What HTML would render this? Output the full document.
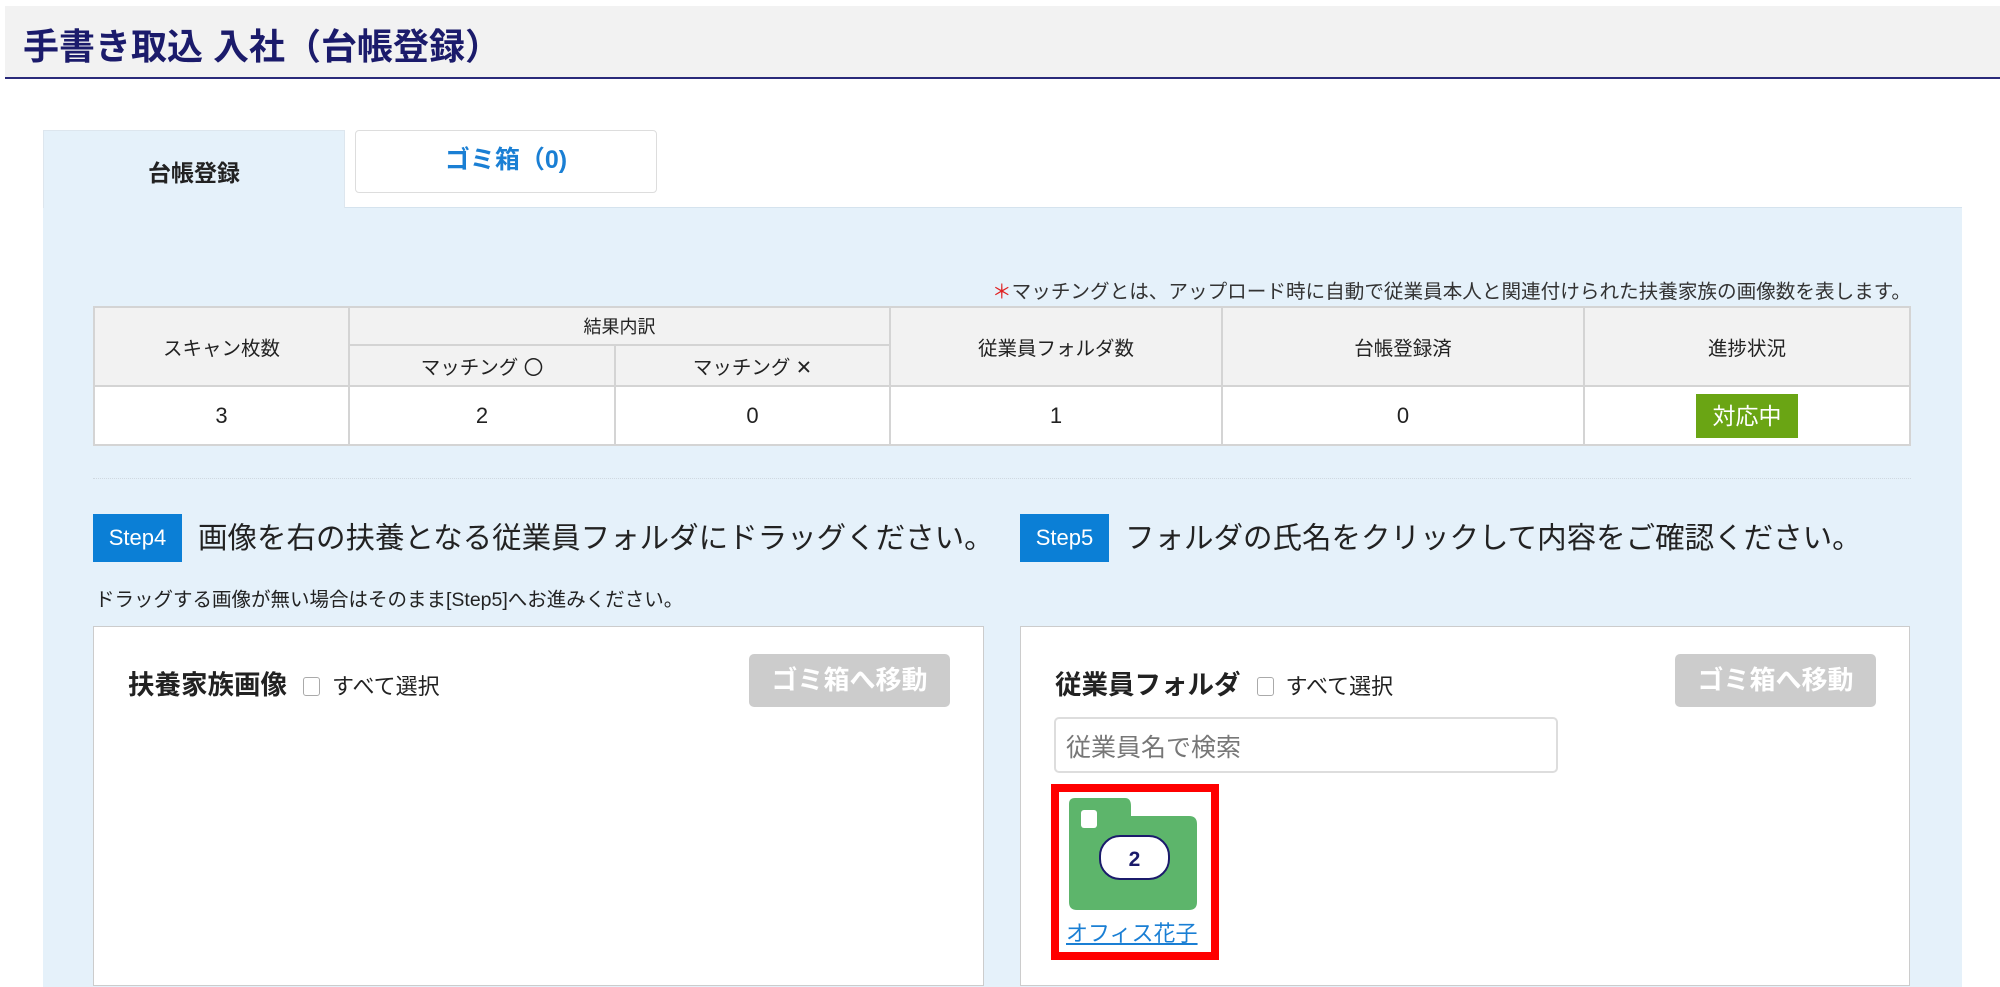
<!DOCTYPE html>
<html><head><meta charset="utf-8"><style>
*{box-sizing:border-box;margin:0;padding:0}
body{width:2000px;height:975px;overflow:hidden;background:#fff;font-family:"Liberation Sans","Noto Sans CJK JP",sans-serif;color:#222;position:relative}
.a{position:absolute}
.hdr{left:5px;top:6px;width:1995px;height:73px;background:#f2f2f2;border-bottom:2px solid #2a2a7a}
.hdr h1{position:absolute;left:18px;top:12px;font-size:36px;font-weight:bold;color:#1b1b6b;white-space:nowrap}
.tab1{left:43px;top:130px;width:302px;height:78px;background:#e5f1fa;border:1px solid #dde6ee;border-bottom:none;font-size:23px;font-weight:bold;text-align:center;line-height:84px}
.tab2{left:355px;top:130px;width:302px;height:63px;background:#fff;border:1px solid #ddd;border-radius:4px;font-size:25px;font-weight:bold;color:#1a7fd4;text-align:center;line-height:58px}
.panel{left:43px;top:207px;width:1919px;height:780px;background:#e5f1fa;border-top:1px solid #d5e3ee}
.note{right:89px;top:275px;font-size:19.6px;color:#333;white-space:nowrap}
.note span{color:#e02020}
table{position:absolute;left:93px;top:306px;width:1818px;border-collapse:collapse;background:#fff;font-size:19.5px}
td{border:2px solid #d4d4d4;text-align:center}
.h td{background:#f2f2f2}
.sep{left:93px;top:478px;width:1818px;border-top:1px dotted #cfd8e0}
.step{height:48px;width:89px;background:#0b7fd6;color:#fff;font-size:22px;line-height:48px;text-align:center}
.stxt{font-size:29.5px;color:#222;white-space:nowrap}
.box{background:#fff;border:1px solid #ccc;height:360px}
.bt{font-size:26.5px;font-weight:bold;white-space:nowrap}
.cb{display:inline-block;width:17px;height:19px;border:1px solid #aaa;border-radius:3px;vertical-align:-2px;margin:0 12px 0 16px;background:#fff}
.sel{font-size:22px;font-weight:normal}
.btn{width:201px;height:53px;background:#ccc;border-radius:5px;color:#fff;font-weight:bold;font-size:26px;text-align:center;line-height:53px;white-space:nowrap}
</style></head><body>
<div class="a hdr"><h1>手書き取込 入社（台帳登録）</h1></div>
<div class="a panel"></div>
<div class="a tab1">台帳登録</div>
<div class="a tab2">ゴミ箱（0)</div>
<div class="a note"><span>＊</span>マッチングとは、アップロード時に自動で従業員本人と関連付けられた扶養家族の画像数を表します。</div>
<table>
<tr class="h" style="height:38px"><td rowspan="2" style="width:255px">スキャン枚数</td><td colspan="2" style="font-size:18px">結果内訳</td><td rowspan="2" style="width:332px">従業員フォルダ数</td><td rowspan="2" style="width:362px">台帳登録済</td><td rowspan="2">進捗状況</td></tr>
<tr class="h" style="height:41px"><td style="width:266px">マッチング 〇</td><td style="width:275px">マッチング ✕</td></tr>
<tr style="height:59px;font-size:22px"><td>3</td><td>2</td><td>0</td><td>1</td><td>0</td><td><span style="display:inline-block;background:#6aa514;color:#fff;width:102px;height:44px;line-height:44px;font-size:23px">対応中</span></td></tr>
</table>
<div class="a sep"></div>
<div class="a step" style="left:93px;top:514px">Step4</div>
<div class="a stxt" style="left:198px;top:515px">画像を右の扶養となる従業員フォルダにドラッグください。</div>
<div class="a step" style="left:1020px;top:514px">Step5</div>
<div class="a stxt" style="left:1125px;top:515px">フォルダの氏名をクリックして内容をご確認ください。</div>
<div class="a" style="left:95px;top:583px;font-size:19.5px;white-space:nowrap">ドラッグする画像が無い場合はそのまま[Step5]へお進みください。</div>
<div class="a box" style="left:93px;top:626px;width:891px"></div>
<div class="a box" style="left:1020px;top:626px;width:890px"></div>
<div class="a bt" style="left:128px;top:663px">扶養家族画像<span class="cb"></span><span class="sel">すべて選択</span></div>
<div class="a btn" style="left:749px;top:654px">ゴミ箱へ移動</div>
<div class="a bt" style="left:1055px;top:663px">従業員フォルダ<span class="cb"></span><span class="sel">すべて選択</span></div>
<div class="a btn" style="left:1675px;top:654px">ゴミ箱へ移動</div>
<div class="a" style="left:1054px;top:717px;width:504px;height:56px;border:2px solid #ddd;border-radius:5px;background:#fff;font-size:25px;color:#777;padding:9px 10px">従業員名で検索</div>
<div class="a" style="left:1051px;top:784px;width:168px;height:176px;border:8px solid #f00;background:#fff"></div>
<svg class="a" style="left:1069px;top:798px" width="128" height="112" viewBox="0 0 128 112">
<path d="M6 0H56Q62 0 62 8V18H120Q128 18 128 26V104Q128 112 120 112H8Q0 112 0 104V6Q0 0 6 0Z" fill="#5db56b"/>
<rect x="12" y="12" width="16" height="18" rx="3" fill="#fff"/>
<rect x="31" y="38" width="69" height="43" rx="20" fill="#fff" stroke="#1b1b6b" stroke-width="2"/>
<text x="65.5" y="68" font-size="21" font-weight="bold" fill="#1b1b6b" text-anchor="middle" font-family="Liberation Sans">2</text>
</svg>
<div class="a" style="left:1066px;top:916px;font-size:22px;color:#1a7fd4;text-decoration:underline;white-space:nowrap">オフィス花子</div>
</body></html>
